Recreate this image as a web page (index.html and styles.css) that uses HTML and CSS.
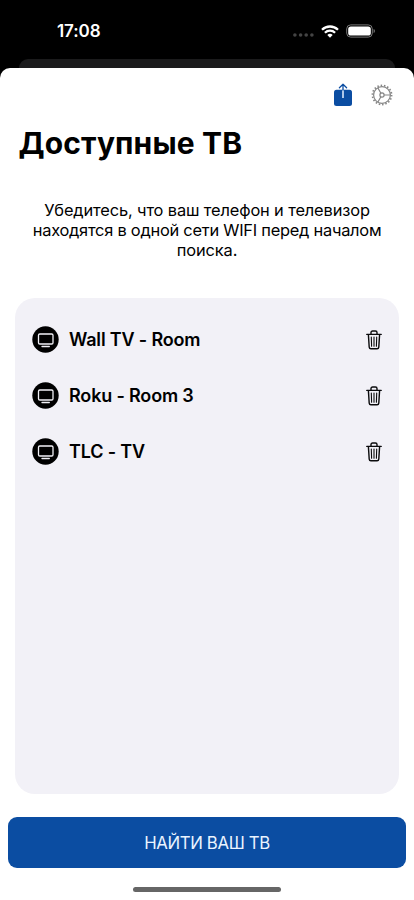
FILE: index.html
```html
<!DOCTYPE html>
<html lang="ru">
<head>
<meta charset="utf-8">
<meta name="viewport" content="width=device-width, initial-scale=1">
<title>Доступные ТВ</title>
<link rel="stylesheet" href="styles.css">
</head>
<body>
<svg class="sprite" aria-hidden="true">
  <symbol id="tv" viewBox="0 0 27 27">
    <circle cx="13.5" cy="13.5" r="13.2" fill="#000"/>
    <rect x="6.500" y="8" width="14.500" height="10" rx="1.300" fill="none" stroke="#f2f1f7" stroke-width="1.300"/>
    <path d="M10 20.500h7.300" stroke="#f2f1f7" stroke-width="1.300" stroke-linecap="round"/>
  </symbol>
  <symbol id="trash" viewBox="0 0 16 20">
    <g fill="none" stroke="#0b0b0d" stroke-linecap="round" stroke-linejoin="round">
      <path stroke-width="1.400" d="M.8 4.400h14.400M2.400 4.600l.8 12.500c.1 1 .7 1.600 1.700 1.600h6.200c1 0 1.600-.6 1.700-1.600l.8-12.500M5 4.200V2.600C5 1.600 5.600 1 6.600 1h2.800c1 0 1.600.6 1.600 1.600v1.600"/>
      <path stroke-width="1.100" d="M5.300 7l.3 9.200M8 7v9.200M10.700 7l-.3 9.200"/>
    </g>
  </symbol>
</svg>
<div class="phone">
  <header class="status">
    <span class="time">17:08</span>
    <div class="signals">
      <svg class="dots" width="21" height="4" viewBox="0 0 21 4" fill="#444"><circle cx="1.900" cy="2" r="1.800"/><circle cx="7.600" cy="2" r="1.800"/><circle cx="13.200" cy="2" r="1.800"/><circle cx="18.900" cy="2" r="1.800"/></svg>
      <svg class="wifi" width="18" height="13" viewBox="0 0 18 13"><g fill="none" stroke="#fff" stroke-width="2.300"><path d="M1 4.800a11.400 11.400 0 0 1 16 0"/><path d="M3.900 7.800a7.300 7.300 0 0 1 10.200 0"/></g><path fill="#fff" d="M9 12.800L6.300 10.100a3.900 3.900 0 0 1 5.400 0z"/></svg>
      <svg class="battery" width="30" height="14" viewBox="0 0 30 14"><rect x=".7" y=".9" width="25.600" height="12.200" rx="4" fill="none" stroke="#777" stroke-width="1"/><rect x="2.200" y="2.400" width="22.600" height="9.200" rx="2.700" fill="#fff"/><path fill="#777" d="M27.600 5c1.700.5 1.700 3.500 0 4z"/></svg>
    </div>
  </header>
  <div class="backdrop"></div>
  <main class="sheet">
    <nav class="toolbar">
      <svg width="20" height="24" viewBox="0 0 20 24"><rect x="1" y="6.800" width="18" height="16.200" rx="2.500" fill="#0b4da2"/><path d="M10 15V6.800" stroke="#e6f1ff" stroke-width="1.500"/><path d="M10 7V1.200M6.400 4.700L10 1.200l3.600 3.500" fill="none" stroke="#0b4da2" stroke-width="1.300" stroke-linecap="round" stroke-linejoin="round"/></svg>
      <svg width="22" height="22" viewBox="0 0 22 22" fill="none" stroke="#858585"><circle cx="11" cy="11" r="8.400" stroke-width="1.200"/><circle cx="11" cy="11" r="9.600" stroke-width="1.700" stroke-dasharray="1.500 1.851"/><circle cx="11" cy="11" r="2.100" stroke-width="1.200"/><path stroke-width="1.200" d="M13.100 11h6.300M9.900 9.200L6.800 3.800M9.900 12.800l-3.100 5.400"/></svg>
    </nav>
    <h1>Доступные ТВ</h1>
    <p class="hint"><span class="l1">Убедитесь, что ваш телефон и телевизор</span><br><span class="l2">находятся в одной сети WIFI перед началом</span><br><span class="l3">поиска.</span></p>
    <ul class="devices">
      <li><svg class="tv"><use href="#tv"/></svg><span>Wall TV - Room</span><svg class="trash"><use href="#trash"/></svg></li>
      <li><svg class="tv"><use href="#tv"/></svg><span>Roku - Room 3</span><svg class="trash"><use href="#trash"/></svg></li>
      <li><svg class="tv"><use href="#tv"/></svg><span>TLC - TV</span><svg class="trash"><use href="#trash"/></svg></li>
    </ul>
    <button class="find">НАЙТИ ВАШ ТВ</button>
    <div class="home"></div>
  </main>
</div>
</body>
</html>
```
FILE: styles.css
```css
* { box-sizing: border-box; }
body { margin: 0; background: #000; font-family: Inter, "Liberation Sans", sans-serif; color: #000; }
.sprite { display: none; }
.phone { width: 414px; height: 900px; overflow: hidden; display: flex; flex-direction: column; background: #000; }
.status { height: 59px; flex: none; padding: 3px 39px 0 57px; display: flex; align-items: center; justify-content: space-between; }
.time { color: #fff; font-size: 17px; font-weight: 600; line-height: 20px; letter-spacing: -.1px; }
.signals { display: flex; align-items: center; }
.dots { margin: 8px 7px 0 0; }
.wifi { margin-right: 7px; }
.battery { margin-right: -1px; }
.backdrop { height: 9px; flex: none; margin: 0 19px; border-radius: 9px 9px 0 0; background: #1b1b1c; }
.sheet { flex: 1; display: flex; flex-direction: column; background: #fff; border-radius: 10px 10px 0 0; }
.toolbar { height: 54px; flex: none; padding: 0 21px 0 0; display: flex; justify-content: flex-end; align-items: center; gap: 18px; }
h1 { margin: 0; padding-left: 18.5px; height: 44px; font-size: 30px; line-height: 43px; font-weight: 700; letter-spacing: .13px; white-space: nowrap; }
.hint { margin: 34px 0 0; height: 61px; text-align: center; font-size: 16.4px; line-height: 20.2px; white-space: nowrap; }
.l1 { letter-spacing: -.13px; }
.l2 { letter-spacing: -.24px; }
.l3 { letter-spacing: -.1px; }
.devices { list-style: none; margin: 37px 15px 0; padding: 13.5px 17px 0 17px; height: 496px; border-radius: 20px; background: #f2f1f7; }
.devices li { display: flex; align-items: center; height: 56px; font-size: 18px; font-weight: 600; letter-spacing: -.17px; }
.tv { width: 27px; height: 27px; margin-right: 10px; }
.trash { width: 16px; height: 20px; margin-left: auto; }
.find { margin: 23px 8px 0; height: 51px; flex: none; border: 0; border-radius: 9px; background: #0b4da2; color: #eaf4ff; font-family: inherit; font-size: 16.8px; font-weight: 400; letter-spacing: -.36px; padding: 0; }
.home { width: 148px; height: 5px; flex: none; margin: 19px auto 0; border-radius: 3px; background: #666; }
```
